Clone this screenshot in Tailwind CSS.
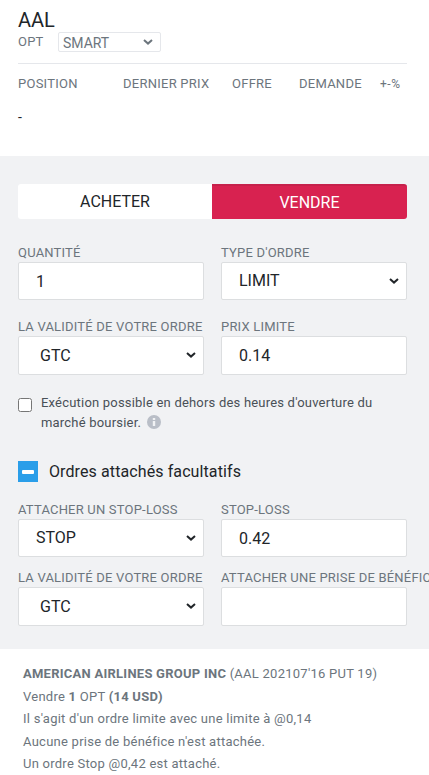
<!DOCTYPE html>
<html lang="fr">
<head>
  <meta charset="UTF-8" />
  <meta name="viewport" content="width=device-width, initial-scale=1.0" />
  <title>Ordre - AAL</title>
  <script src="https://cdn.jsdelivr.net/npm/@tailwindcss/browser@4"></script>
</head>
<body class="bg-white font-['Roboto',sans-serif] text-[#212529] w-[429px] h-[775px] overflow-hidden">
  <!-- entete -->
  <div class="h-[156px] px-[18px] pt-[8px]">
    <h1 class="text-[20px] leading-[24px]">AAL</h1>
    <div class="flex items-center h-[20px] text-[13px] tracking-[0.2px] text-[#6c757d]">
      <span class="w-[40px]">OPT</span>
      <div class="relative w-[103px] h-[20px]">
        <select class="appearance-none w-full h-full pl-[4px] bg-white border border-[#e5e7eb] rounded-[2px] text-[14px] tracking-normal text-[#6c757d]">
          <option>SMART</option>
        </select>
        <svg class="absolute right-[8px] top-[7px] w-[10px] h-[6px] pointer-events-none" viewBox="0 0 10 6"><polyline points="1,1 5,4.6 9,1" fill="none" stroke="#6c757d" stroke-width="2" /></svg>
      </div>
    </div>
    <div class="mt-[11px] w-[389px] border-t border-[#e5e7eb]"></div>
    <div class="h-[20px] mt-[10px] text-[13px] leading-[20px] tracking-[0.25px] text-[#6c757d] flex">
      <span class="w-[105px]">POSITION</span>
      <span class="w-[109px]">DERNIER PRIX</span>
      <span class="w-[67px]">OFFRE</span>
      <span class="w-[81px]">DEMANDE</span>
      <span class="text-[12px] tracking-[0.5px]">+-%</span>
    </div>
    <div class="mt-[13px] text-[14px] leading-[20px]">-</div>
  </div>

  <!-- formulaire -->
  <div class="h-[493px] bg-[#f1f2f4] px-[18px] pt-[28px]">
    <div class="flex w-[389px] h-[35px] text-[16px]">
      <button class="w-[194px] bg-white rounded-l-[3px]">ACHETER</button>
      <button class="w-[195px] bg-[#d82250] text-white rounded-r-[3px] border-t-2 border-[#c6214b]">VENDRE</button>
    </div>

    <div class="grid grid-cols-[186px_186px] gap-x-[17px] mt-[25px]">
      <div>
        <label class="block text-[13px] leading-[18px] tracking-[0.2px] text-[#6c757d]">QUANTITÉ</label>
        <input type="text" value="1" class="w-full h-[38px] px-[17px] bg-white border border-[#dcdee0] rounded-[2px] text-[16px]" />
      </div>
      <div>
        <label class="block text-[13px] leading-[18px] tracking-[0.2px] text-[#6c757d]">TYPE D'ORDRE</label>
        <div class="relative">
          <select class="appearance-none w-full h-[38px] pl-[17px] bg-white border border-[#dcdee0] rounded-[2px] text-[16px]"><option>LIMIT</option></select>
          <svg class="absolute right-[8px] top-[16px] w-[10px] h-[6px] pointer-events-none" viewBox="0 0 10 6"><polyline points="1,1 5,4.6 9,1" fill="none" stroke="#212529" stroke-width="2" /></svg>
        </div>
      </div>
      <div class="mt-[18px]">
        <label class="block text-[13px] leading-[18px] tracking-[0.2px] text-[#6c757d] whitespace-nowrap">LA VALIDITÉ DE VOTRE ORDRE</label>
        <div class="relative">
          <select class="appearance-none w-full h-[39px] pl-[21px] bg-white border border-[#dcdee0] rounded-[2px] text-[16px]"><option>GTC</option></select>
          <svg class="absolute right-[8px] top-[16px] w-[10px] h-[6px] pointer-events-none" viewBox="0 0 10 6"><polyline points="1,1 5,4.6 9,1" fill="none" stroke="#212529" stroke-width="2" /></svg>
        </div>
      </div>
      <div class="mt-[18px]">
        <label class="block text-[13px] leading-[18px] tracking-[0.2px] text-[#6c757d]">PRIX LIMITE</label>
        <input type="text" value="0.14" class="w-full h-[39px] px-[17px] bg-white border border-[#dcdee0] rounded-[2px] text-[16px]" />
      </div>
    </div>

    <div class="flex mt-[18px]">
      <input type="checkbox" class="w-[14px] h-[14px] mt-[5px] shrink-0" />
      <p class="ml-[9px] text-[13px] leading-[20px] tracking-[0.2px] text-[#495057]">
        Exécution possible en dehors des heures d'ouverture du<br />marché boursier.
        <svg class="inline-block w-[14px] h-[14px] ml-[2px] align-[-2px]" viewBox="0 0 14 14"><circle cx="7" cy="7" r="7" fill="#b9bec7" /><rect x="5.8" y="6" width="2.4" height="5" fill="#f1f2f4" /><rect x="5.8" y="3" width="2.4" height="2" fill="#f1f2f4" /></svg>
      </p>
    </div>

    <div class="flex items-center mt-[28px] h-[21px]">
      <span class="flex items-center justify-center w-[20px] h-[21px] bg-[#2a9ee9]"><span class="block w-[12px] h-[4px] bg-white rounded-[1px]"></span></span>
      <span class="ml-[11px] text-[16px] tracking-[0.1px]">Ordres attachés facultatifs</span>
    </div>

    <div class="grid grid-cols-[186px_186px] gap-x-[17px] mt-[19px]">
      <div>
        <label class="block text-[13px] leading-[18px] tracking-[0.2px] text-[#6c757d]">ATTACHER UN STOP-LOSS</label>
        <div class="relative">
          <select class="appearance-none w-full h-[38px] pl-[17px] bg-white border border-[#dcdee0] rounded-[2px] text-[16px]"><option>STOP</option></select>
          <svg class="absolute right-[8px] top-[16px] w-[10px] h-[6px] pointer-events-none" viewBox="0 0 10 6"><polyline points="1,1 5,4.6 9,1" fill="none" stroke="#212529" stroke-width="2" /></svg>
        </div>
      </div>
      <div>
        <label class="block text-[13px] leading-[18px] tracking-[0.2px] text-[#6c757d]">STOP-LOSS</label>
        <input type="text" value="0.42" class="w-full h-[38px] px-[17px] bg-white border border-[#dcdee0] rounded-[2px] text-[16px]" />
      </div>
      <div class="mt-[12px]">
        <label class="block text-[13px] leading-[18px] tracking-[0.2px] text-[#6c757d] whitespace-nowrap">LA VALIDITÉ DE VOTRE ORDRE</label>
        <div class="relative">
          <select class="appearance-none w-full h-[39px] pl-[21px] bg-white border border-[#dcdee0] rounded-[2px] text-[16px]"><option>GTC</option></select>
          <svg class="absolute right-[8px] top-[16px] w-[10px] h-[6px] pointer-events-none" viewBox="0 0 10 6"><polyline points="1,1 5,4.6 9,1" fill="none" stroke="#212529" stroke-width="2" /></svg>
        </div>
      </div>
      <div class="mt-[12px]">
        <label class="block text-[13px] leading-[18px] tracking-[0.2px] text-[#6c757d] whitespace-nowrap">ATTACHER UNE PRISE DE BÉNÉFICE</label>
        <input type="text" class="w-full h-[39px] px-[17px] bg-white border border-[#dcdee0] rounded-[2px] text-[16px]" />
      </div>
    </div>
  </div>

  <!-- resume -->
  <div class="px-[23px] pt-[14px] text-[13px] leading-[22.5px] tracking-[0.25px] text-[#6c757d] whitespace-nowrap">
    <p><b>AMERICAN AIRLINES GROUP INC</b> (AAL 202107'16 PUT 19)</p>
    <p>Vendre <b>1</b> OPT <b>(14 USD)</b></p>
    <p>Il s'agit d'un ordre limite avec une limite à @0,14</p>
    <p>Aucune prise de bénéfice n'est attachée.</p>
    <p>Un ordre Stop @0,42 est attaché.</p>
  </div>
</body>
</html>
